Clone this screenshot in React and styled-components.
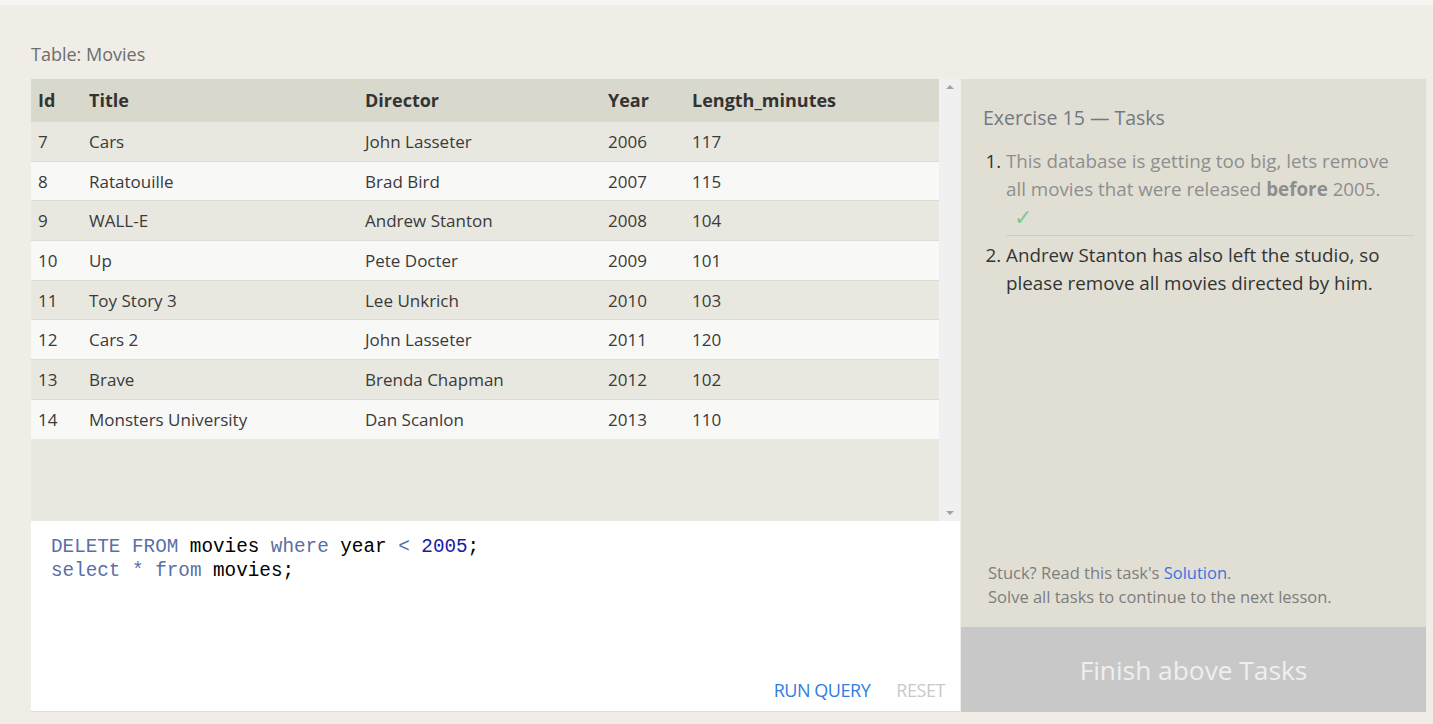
import React from "react";
import styled, { createGlobalStyle } from "styled-components";

const GlobalStyle = createGlobalStyle`
  body {
    margin: 0;
    background: #efede6;
    font-family: "Open Sans", "Noto Sans", sans-serif;
  }
`;

const movies = [
  { id: 7, title: "Cars", director: "John Lasseter", year: 2006, length: 117 },
  { id: 8, title: "Ratatouille", director: "Brad Bird", year: 2007, length: 115 },
  { id: 9, title: "WALL-E", director: "Andrew Stanton", year: 2008, length: 104 },
  { id: 10, title: "Up", director: "Pete Docter", year: 2009, length: 101 },
  { id: 11, title: "Toy Story 3", director: "Lee Unkrich", year: 2010, length: 103 },
  { id: 12, title: "Cars 2", director: "John Lasseter", year: 2011, length: 120 },
  { id: 13, title: "Brave", director: "Brenda Chapman", year: 2012, length: 102 },
  { id: 14, title: "Monsters University", director: "Dan Scanlon", year: 2013, length: 110 },
];

const columns = [
  { key: "id", label: "Id", width: 51 },
  { key: "title", label: "Title", width: 276 },
  { key: "director", label: "Director", width: 243 },
  { key: "year", label: "Year", width: 84 },
  { key: "length", label: "Length_minutes" },
];

const TopStrip = styled.div`
  height: 5px;
  background: #f6f5f1;
`;

const Page = styled.div`
  padding: 0 7px 0 31px;
`;

const TableLabel = styled.div`
  height: 74px;
  display: flex;
  align-items: flex-end;
  padding-bottom: 13px;
  box-sizing: border-box;
  font-size: 18px;
  color: #6e6e6e;
`;

const Workspace = styled.div`
  display: grid;
  grid-template-columns: 929px 1fr;
  gap: 1px;
`;

const LeftColumn = styled.div`
  display: flex;
  flex-direction: column;
`;

const TableWrap = styled.div`
  height: 442px;
  display: flex;
  background: #e9e8e0;
`;

const TableScroll = styled.div`
  flex: 1;
`;

const Table = styled.table`
  width: 100%;
  border-collapse: collapse;
  font-size: 17px;
  color: #3a3a3a;
`;

const HeadCell = styled.th`
  height: 42px;
  padding: 0 0 0 7px;
  text-align: left;
  font-weight: 700;
  font-size: 18px;
  color: #333;
  background: #d9d8cc;
`;

const Row = styled.tr`
  height: 39.7px;
  background: ${(p) => (p.$odd ? "#e9e8e0" : "#f8f8f7")};
  border-top: 1px solid #dcdbd5;
`;

const Cell = styled.td`
  padding: 0 0 0 7px;
`;

const ScrollBar = styled.div`
  width: 21px;
  background: #f0f0f0;
  display: flex;
  flex-direction: column;
  justify-content: space-between;
  align-items: center;
  padding: 6px 0 6px;
  box-sizing: border-box;
`;

const Arrow = styled.div`
  width: 0;
  height: 0;
  border-left: 4px solid transparent;
  border-right: 4px solid transparent;
  ${(p) =>
    p.$down
      ? "border-top: 4px solid #a3a3a3;"
      : "border-bottom: 4px solid #a3a3a3;"}
`;

const Editor = styled.div`
  height: 191px;
  background: #fff;
  border-bottom: 1px solid #e0ded6;
  box-sizing: border-box;
  display: flex;
  flex-direction: column;
  justify-content: space-between;
`;

const Code = styled.pre`
  margin: 0;
  padding: 14px 20px 0;
  font-family: "Liberation Mono", "DejaVu Sans Mono", monospace;
  font-size: 19.3px;
  line-height: 24px;
  color: #000;
`;

const Kw = styled.span`
  color: ${(p) => p.$color || "#5a6fa6"};
`;

const EditorActions = styled.div`
  display: flex;
  justify-content: flex-end;
  gap: 26px;
  padding: 0 15px 9px 0;
`;

const ActionButton = styled.span`
  font-size: 18px;
  letter-spacing: -0.45px;
  color: ${(p) => (p.$muted ? "#c9c9c9" : "#2f7de1")};
`;

const RightColumn = styled.div`
  display: flex;
  flex-direction: column;
  background: #e1dfd4;
`;

const TaskPanel = styled.div`
  flex: 1;
  padding: 25px 12px 0 22px;
  display: flex;
  flex-direction: column;
`;

const TaskTitle = styled.div`
  font-size: 19.5px;
  color: #707985;
  margin-bottom: 16px;
`;

const TaskList = styled.ol`
  margin: 0;
  padding: 0 0 0 23px;
  font-size: 18.8px;
  line-height: 28px;
`;

const TaskItem = styled.li`
  color: ${(p) => (p.$done ? "#8e8e8e" : "#333")};
  padding-right: ${(p) => (p.$done ? "12px" : "0")};
  padding-bottom: 6px;
  & + & {
    border-top: 1px solid #cfcdc2;
    padding-top: 5px;
  }
  &::marker {
    color: #333;
  }
`;

const Check = styled.div`
  color: #7acb8f;
  padding-left: 8px;
  font-size: 22px;
  line-height: 26px;
`;

const Hint = styled.div`
  margin-top: auto;
  padding: 0 0 18px 5px;
  font-size: 16.5px;
  line-height: 24px;
  color: #7d7d7d;
`;

const Link = styled.span`
  color: #3b73e0;
`;

const FinishButton = styled.div`
  height: 85px;
  background: #c8c8c8;
  color: #efefef;
  font-size: 26.3px;
  display: flex;
  align-items: center;
  justify-content: center;
`;

const App = () => {
  return (
    <>
      <GlobalStyle />
      <TopStrip />
      <Page>
        <TableLabel>Table: Movies</TableLabel>
        <Workspace>
          <LeftColumn>
            <TableWrap>
              <TableScroll>
                <Table>
                  <colgroup>
                    {columns.map((c) => (
                      <col key={c.key} style={c.width ? { width: c.width } : undefined} />
                    ))}
                  </colgroup>
                  <thead>
                    <tr>
                      {columns.map((c) => (
                        <HeadCell key={c.key}>{c.label}</HeadCell>
                      ))}
                    </tr>
                  </thead>
                  <tbody>
                    {movies.map((m, i) => (
                      <Row key={m.id} $odd={i % 2 === 0}>
                        {columns.map((c) => (
                          <Cell key={c.key}>{m[c.key]}</Cell>
                        ))}
                      </Row>
                    ))}
                  </tbody>
                </Table>
              </TableScroll>
              <ScrollBar>
                <Arrow />
                <Arrow $down />
              </ScrollBar>
            </TableWrap>
            <Editor>
              <Code>
                <Kw>DELETE FROM</Kw> movies <Kw>where</Kw> year <Kw>&lt;</Kw>{" "}
                <Kw $color="#1a1aa6">2005</Kw>;{"\n"}
                <Kw>select</Kw> <Kw>*</Kw> <Kw>from</Kw> movies;
              </Code>
              <EditorActions>
                <ActionButton>RUN QUERY</ActionButton>
                <ActionButton $muted>RESET</ActionButton>
              </EditorActions>
            </Editor>
          </LeftColumn>
          <RightColumn>
            <TaskPanel>
              <TaskTitle>Exercise 15 — Tasks</TaskTitle>
              <TaskList>
                <TaskItem $done>
                  This database is getting too big, lets remove all movies that were released{" "}
                  <b>before</b> 2005.
                  <Check>✓</Check>
                </TaskItem>
                <TaskItem>
                  Andrew Stanton has also left the studio, so please remove all movies directed by him.
                </TaskItem>
              </TaskList>
              <Hint>
                Stuck? Read this task's <Link>Solution</Link>.
                <br />
                Solve all tasks to continue to the next lesson.
              </Hint>
            </TaskPanel>
            <FinishButton>Finish above Tasks</FinishButton>
          </RightColumn>
        </Workspace>
      </Page>
    </>
  );
};

export default App;
